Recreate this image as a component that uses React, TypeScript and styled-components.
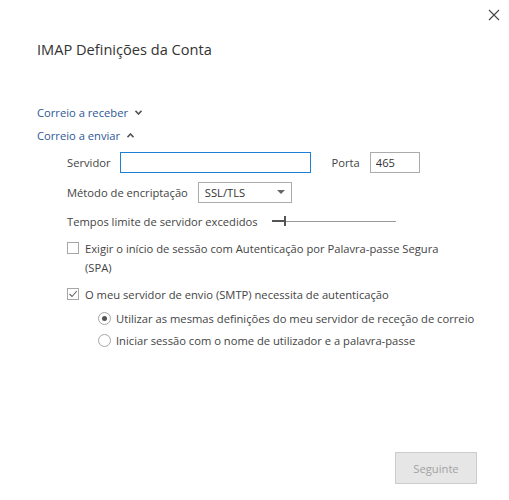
import React from "react";
import styled, { createGlobalStyle } from "styled-components";

const GlobalStyle = createGlobalStyle`
  html, body {
    margin: 0;
    padding: 0;
    background: #ffffff;
  }
  body {
    font-family: "Open Sans", "Noto Sans", sans-serif;
  }
`;

const Dialog = styled.div`
  width: 509px;
  height: 500px;
  box-sizing: border-box;
  display: flex;
  flex-direction: column;
  background: #ffffff;
  color: #444444;
  font-size: 11.2px;
`;

const TopBar = styled.div`
  height: 30px;
  display: flex;
  justify-content: flex-end;
  align-items: center;
  padding-right: 9px;
`;

const CloseButton = styled.button`
  width: 12px;
  height: 12px;
  padding: 0;
  border: 0;
  background: none;
  display: flex;
  cursor: pointer;
`;

const Title = styled.h1`
  margin: 7px 0 0 37px;
  font-size: 14.6px;
  line-height: 24px;
  font-weight: 400;
  color: #333333;
`;

const Section = styled.div`
  margin-left: 37px;
  display: flex;
  flex-direction: column;
`;

const Toggle = styled.button<{ $top: number }>`
  align-self: flex-start;
  margin-top: ${(p) => p.$top}px;
  padding: 0;
  border: 0;
  background: none;
  display: flex;
  align-items: center;
  gap: 7px;
  height: 20px;
  font-family: inherit;
  font-size: 11.2px;
  color: #2b5797;
  cursor: pointer;
`;

const Body = styled.div`
  margin-left: 30px;
  display: flex;
  flex-direction: column;
`;

const Row = styled.div<{ $top: number }>`
  margin-top: ${(p) => p.$top}px;
  display: flex;
  align-items: center;
  height: 22px;
`;

const Label = styled.span<{ $gap: number }>`
  margin-right: ${(p) => p.$gap}px;
  white-space: nowrap;
`;

const TextInput = styled.input<{ $width: number; $focused?: boolean }>`
  box-sizing: border-box;
  width: ${(p) => p.$width}px;
  height: 21px;
  margin: 0;
  padding: 0 5px;
  border: 1px solid ${(p) => (p.$focused ? "#1e7fd6" : "#ababab")};
  outline: none;
  font-family: inherit;
  font-size: 11.2px;
  color: #333333;
`;

const Select = styled.div`
  box-sizing: border-box;
  width: 94px;
  height: 21px;
  padding: 0 6px;
  border: 1px solid #ababab;
  display: flex;
  align-items: center;
  justify-content: space-between;
  color: #333333;
`;

const Caret = styled.span`
  width: 0;
  height: 0;
  border-left: 4px solid transparent;
  border-right: 4px solid transparent;
  border-top: 4px solid #666666;
`;

const Slider = styled.div`
  position: relative;
  width: 124px;
  height: 10px;
  display: flex;
  align-items: center;
`;

const Track = styled.div`
  flex: 1;
  height: 1px;
  background: #9a9a9a;
`;

const TrackFill = styled.div`
  position: absolute;
  left: 0;
  width: 12px;
  height: 2px;
  background: #555555;
`;

const Thumb = styled.div`
  position: absolute;
  left: 12px;
  top: 0;
  width: 2px;
  height: 10px;
  background: #555555;
`;

const CheckRow = styled.label<{ $top: number; $indent?: number }>`
  margin-top: ${(p) => p.$top}px;
  margin-left: ${(p) => p.$indent || 0}px;
  display: flex;
  align-items: flex-start;
  line-height: 19px;
`;

const Box = styled.span`
  flex: none;
  box-sizing: border-box;
  width: 12px;
  height: 12px;
  margin: 3px 6px 0 0;
  border: 1px solid #a6a6a6;
  background: #ffffff;
  display: flex;
  align-items: center;
  justify-content: center;
`;

const Radio = styled.span<{ $on?: boolean }>`
  flex: none;
  box-sizing: border-box;
  width: 13px;
  height: 13px;
  margin: 3px 5px 0 0;
  border: 1px solid #a6a6a6;
  border-radius: 50%;
  display: flex;
  align-items: center;
  justify-content: center;
  &::after {
    content: "";
    width: 5px;
    height: 5px;
    border-radius: 50%;
    background: ${(p) => (p.$on ? "#555555" : "transparent")};
  }
`;

const Footer = styled.div`
  margin-top: auto;
  padding: 0 32px 16px 0;
  display: flex;
  justify-content: flex-end;
`;

const NextButton = styled.button`
  width: 82px;
  height: 32px;
  border: 1px solid #cccccc;
  background: #e6e6e6;
  color: #a3a3a3;
  font-family: inherit;
  font-size: 11.2px;
`;

const Chevron: React.FC<{ up?: boolean }> = ({ up }) => (
  <svg width="7" height="5" viewBox="0 0 7 5">
    <path
      d={up ? "M0.5 4.2 L3.5 1 L6.5 4.2" : "M0.5 0.8 L3.5 4 L6.5 0.8"}
      fill="none"
      stroke="#555"
      strokeWidth="1.6"
    />
  </svg>
);

const App: React.FC = () => {
  return (
    <>
      <GlobalStyle />
      <Dialog>
        <TopBar>
          <CloseButton aria-label="Fechar">
            <svg width="12" height="12" viewBox="0 0 12 12">
              <path d="M1 1 L11 11 M11 1 L1 11" stroke="#444" strokeWidth="1.1" />
            </svg>
          </CloseButton>
        </TopBar>
        <Title>IMAP Definições da Conta</Title>
        <Section>
          <Toggle $top={41}>
            Correio a receber <Chevron />
          </Toggle>
          <Toggle $top={3}>
            Correio a enviar <Chevron up />
          </Toggle>
          <Body>
            <Row $top={6}>
              <Label $gap={9}>Servidor</Label>
              <TextInput $width={191} $focused />
              <Label $gap={10} style={{ marginLeft: 21 }}>
                Porta
              </Label>
              <TextInput $width={50} defaultValue="465" />
            </Row>
            <Row $top={8}>
              <Label $gap={10}>Método de encriptação</Label>
              <Select>
                SSL/TLS <Caret />
              </Select>
            </Row>
            <Row $top={7}>
              <Label $gap={14}>Tempos limite de servidor excedidos</Label>
              <Slider>
                <Track />
                <TrackFill />
                <Thumb />
              </Slider>
            </Row>
            <CheckRow $top={7}>
              <Box />
              <span>
                Exigir o início de sessão com Autenticação por Palavra-passe Segura
                <br />
                (SPA)
              </span>
            </CheckRow>
            <CheckRow $top={8}>
              <Box>
                <svg width="10" height="10" viewBox="0 0 10 10">
                  <path d="M1.5 5 L4 7.5 L8.8 2" fill="none" stroke="#666" strokeWidth="1.1" />
                </svg>
              </Box>
              <span>O meu servidor de envio (SMTP) necessita de autenticação</span>
            </CheckRow>
            <CheckRow $top={5} $indent={31}>
              <Radio $on />
              <span>Utilizar as mesmas definições do meu servidor de receção de correio</span>
            </CheckRow>
            <CheckRow $top={3} $indent={31}>
              <Radio />
              <span>Iniciar sessão com o nome de utilizador e a palavra-passe</span>
            </CheckRow>
          </Body>
        </Section>
        <Footer>
          <NextButton disabled>Seguinte</NextButton>
        </Footer>
      </Dialog>
    </>
  );
};

export default App;
